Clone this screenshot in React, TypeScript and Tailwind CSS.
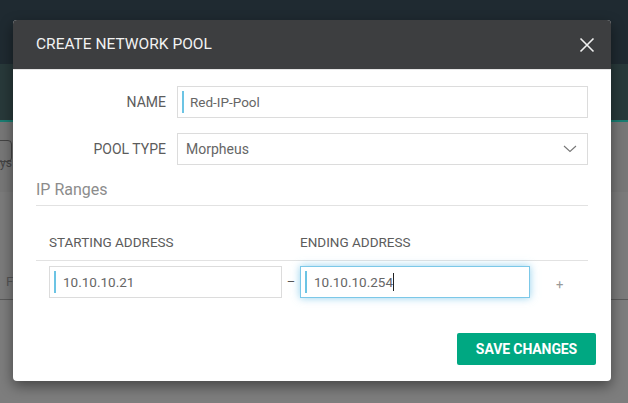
import React from "react";

export default function App() {
  const font = { fontFamily: "Roboto, 'Liberation Sans', sans-serif" };
  return (
    <div className="relative w-[628px] h-[403px] overflow-hidden" style={font}>
      {/* dimmed page behind */}
      <div className="flex flex-col h-full">
        <div className="h-[64px] bg-[#1f2a31]" />
        <div className="h-[56px] bg-[#28393a]" />
        <div className="h-[2px] bg-[#1a7d72]" />
        <div className="h-[70px] bg-[#777777] relative">
          <div className="absolute left-[-4px] top-[18px] w-[16px] h-[22px] border border-[#444] rounded-sm" />
          <div className="absolute left-0 top-[32px] text-[12px] text-[#444]">ys</div>
        </div>
        <div className="h-[108px] bg-[#7b7b7b] border-b border-[#5a5a5a] relative">
          <div className="absolute left-[6px] top-[80px] text-[13px] text-[#555]">F</div>
        </div>
        <div className="flex-1 bg-[#7d7d7d]" />
      </div>

      {/* modal */}
      <div className="absolute left-[13px] top-[20px] w-[598px] h-[361px] bg-white rounded-[4px] shadow-[0_5px_14px_rgba(0,0,0,0.45)] overflow-hidden flex flex-col">
        <div className="h-[50px] shrink-0 bg-[#3d3e40] border-b border-[#e5e5e5] flex items-center justify-between pl-[23px] pr-[16px]">
          <span className="text-[15.5px] text-[#f2f2f2] tracking-[0px] mt-[1px]">CREATE NETWORK POOL</span>
          <svg width="16" height="16" viewBox="0 0 16 16">
            <path d="M1.5 1.5 L14.5 14.5 M14.5 1.5 L1.5 14.5" stroke="#f0f0f0" strokeWidth="1.6" />
          </svg>
        </div>

        <div className="flex flex-col pl-[23px] pr-[23px] pt-[16px]">
          <div className="flex items-center h-[32px]">
            <div className="w-[130px] text-right text-[14px] text-[#5c5c5c]">NAME</div>
            <div className="ml-[11px] flex-1 h-[32px] border border-[#dcdcdc] flex items-center pl-[4px]">
              <div className="w-[2px] h-[22px] bg-[#6cc4e4]" />
              <span className="ml-[6px] text-[13.5px] text-[#666]">Red-IP-Pool</span>
            </div>
          </div>
          <div className="flex items-center h-[32px] mt-[15px]">
            <div className="w-[130px] text-right text-[14px] text-[#5c5c5c]">POOL TYPE</div>
            <div className="ml-[11px] flex-1 h-[32px] border border-[#dcdcdc] flex items-center justify-between pl-[8px] pr-[10px]">
              <span className="text-[14px] text-[#666]">Morpheus</span>
              <svg width="14" height="8" viewBox="0 0 14 8">
                <path d="M1 1 L7 6.5 L13 1" stroke="#777" strokeWidth="1.1" fill="none" />
              </svg>
            </div>
          </div>

          <div className="mt-[14px] text-[16px] text-[#8c8c8c] leading-[22px]">IP Ranges</div>
          <div className="mt-[4px] h-px bg-[#e2e2e2]" />

          <div className="flex mt-[29px] text-[13.5px] text-[#5c5c5c] leading-[14px]">
            <div className="pl-[13px] w-[264px]">STARTING ADDRESS</div>
            <div>ENDING ADDRESS</div>
          </div>
          <div className="mt-[11px] h-px bg-[#e2e2e2]" />

          <div className="flex items-center mt-[5px] pl-[13px]">
            <div className="w-[233px] h-[32px] border border-[#dcdcdc] flex items-center pl-[4px]">
              <div className="w-[2px] h-[22px] bg-[#6cc4e4]" />
              <span className="ml-[7px] text-[13.5px] text-[#666]">10.10.10.21</span>
            </div>
            <div className="w-[18px] text-center text-[13px] text-[#555]">–</div>
            <div className="w-[230px] h-[32px] border border-[#7cc8e8] shadow-[0_0_8px_rgba(102,190,230,0.7)] flex items-center pl-[4px]">
              <div className="w-[2px] h-[22px] bg-[#6cc4e4]" />
              <span className="ml-[7px] text-[13.5px] text-[#666]">10.10.10.254</span>
              <div className="w-px h-[18px] bg-[#222]" />
            </div>
            <div className="ml-[26px] text-[13px] text-[#999] mt-[6px]">+</div>
          </div>

          <div className="flex justify-end mt-[35px] mr-[-8px]">
            <div className="w-[139px] h-[32px] bg-[#00a882] rounded-[2px] flex items-center justify-center text-white text-[14px] font-bold tracking-[-0.1px]">
              SAVE CHANGES
            </div>
          </div>
        </div>
      </div>
    </div>
  );
}
